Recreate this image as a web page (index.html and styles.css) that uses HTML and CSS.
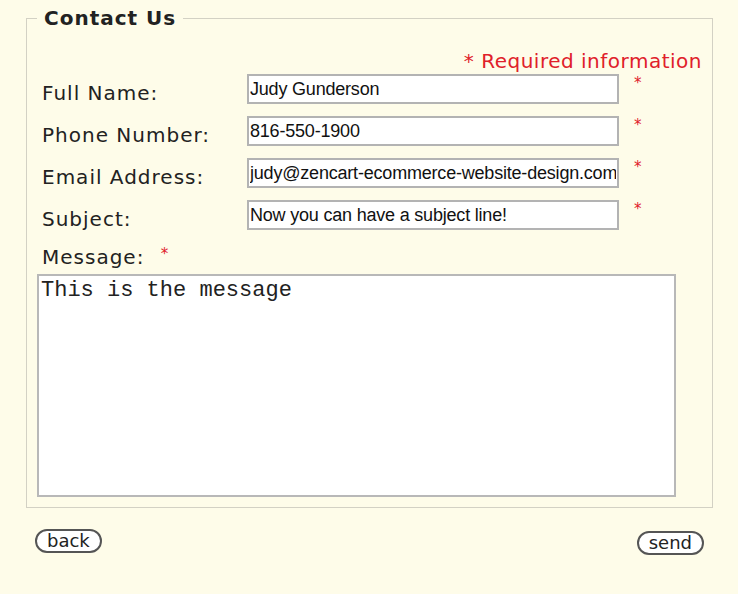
FILE: index.html
```html
<html lang="en">
<head>
    <meta charset="UTF-8">
    <meta name="viewport" content="width=device-width, initial-scale=1.0">
    <title>Contact Us</title>
    <link rel="stylesheet" href="styles.css">
</head>
<body>

<form class="contact" id="contactForm">
    <fieldset class="contact-box">
        <legend>Contact Us</legend>
        <div class="required-note">* Required information</div>

        <div class="row">
            <label for="name">Full Name:</label>
            <input type="text" id="name" value="Judy Gunderson">
            <span class="star">*</span>
        </div>
        <div class="row">
            <label for="phone">Phone Number:</label>
            <input type="text" id="phone" value="816-550-1900">
            <span class="star">*</span>
        </div>
        <div class="row">
            <label for="email">Email Address:</label>
            <input type="text" id="email" value="judy@zencart-ecommerce-website-design.com">
            <span class="star">*</span>
        </div>
        <div class="row">
            <label for="subject">Subject:</label>
            <input type="text" id="subject" value="Now you can have a subject line!">
            <span class="star">*</span>
        </div>

        <label class="message-label" for="message">Message: <span class="star">*</span></label>
        <textarea id="message">This is the message</textarea>
    </fieldset>

    <div class="buttons">
        <button type="button" class="pill">back</button>
        <button type="submit" class="pill send">send</button>
    </div>
</form>

</body>
</html>
```

FILE: styles.css
```css
body {
    font-family: "DejaVu Sans", Verdana, sans-serif;
    margin: 0;
    padding: 0;
    background-color: #fefce9;
    color: #222;
}
.contact {
    margin: 0;
}
.contact-box {
    margin: 6px 25px 0 26px;
    padding: 0 10px 10px 10px;
    border: 1px solid #d3d1c4;
}
.contact-box legend {
    font-size: 20px;
    font-weight: bold;
    letter-spacing: 1px;
    padding: 0 7px;
    line-height: 24px;
}
.required-note {
    text-align: right;
    color: #e0202a;
    font-size: 20px;
    letter-spacing: 0.5px;
    margin: 19px 0 1px;
    line-height: 24px;
}
.row {
    display: grid;
    grid-template-columns: 210px 372px 30px;
    align-items: start;
    height: 42px;
}
.row label {
    padding: 7px 0 0 5px;
    font-size: 20px;
    letter-spacing: 1px;
    line-height: 24px;
}
.row input {
    width: 372px;
    height: 30px;
    box-sizing: border-box;
    border: 2px solid #b3b3b3;
    background: #fff;
    padding: 0 1px;
    font-family: "Liberation Sans", Arial, sans-serif;
    font-size: 18px;
    letter-spacing: -0.2px;
    color: #111;
}
.star {
    color: #e0202a;
    font-size: 15px;
    line-height: 14px;
    padding: 2px 0 0 15px;
}
.message-label {
    display: block;
    padding: 3px 0 0 5px;
    font-size: 20px;
    letter-spacing: 1px;
    line-height: 24px;
}
.message-label .star {
    padding: 0 0 0 9px;
    vertical-align: 5px;
}
textarea {
    display: block;
    width: 639px;
    height: 223px;
    box-sizing: border-box;
    margin-top: 5px;
    border: 2px solid #b8b8b8;
    background: #fff;
    padding: 3px 2px;
    font-family: "Liberation Mono", "Courier New", monospace;
    font-size: 22px;
    line-height: 24px;
    color: #222;
    resize: none;
}
.buttons {
    display: flex;
    justify-content: space-between;
    margin: 21px 34px 0 35px;
}
.pill {
    font-family: "DejaVu Sans", Verdana, sans-serif;
    font-size: 18px;
    padding: 0 10px;
    height: 24px;
    line-height: 20px;
    background: #fff;
    color: #222;
    border: 2px solid #555;
    border-radius: 12px;
    cursor: pointer;
}
.send {
    margin-top: 2px;
}
```
